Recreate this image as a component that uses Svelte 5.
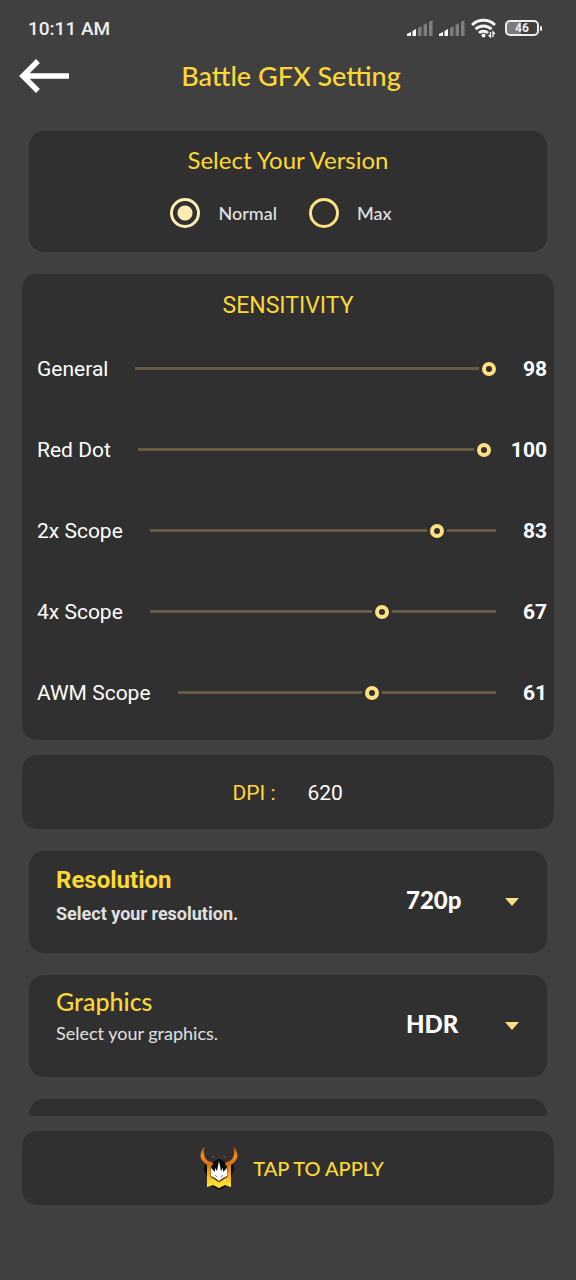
<script lang="ts">
  type Slider = { id: string; label: string; value: number };

  let version = $state('normal');
  let dpi = $state('620');
  let resolution = $state('720p');
  let graphics = $state('HDR');

  let sliders: Slider[] = $state([
    { id: 'general', label: 'General', value: 98 },
    { id: 'red-dot', label: 'Red Dot', value: 100 },
    { id: 'scope-2x', label: '2x Scope', value: 83 },
    { id: 'scope-4x', label: '4x Scope', value: 67 },
    { id: 'scope-awm', label: 'AWM Scope', value: 61 }
  ]);
</script>

{#snippet signal()}
  <svg width="26" height="18" viewBox="0 0 26 18" aria-hidden="true">
    <path d="M0 17v-2l4-2v4z" fill="#fff" />
    <path d="M5.500 17v-5l3.500-2v7z" fill="#fff" />
    <path d="M11 17V9l3.500-2v10zM16.500 17V6L20 4v13zM22 17V3l3.500-2v16z" fill="#7e7e7e" />
  </svg>
{/snippet}

{#snippet caret()}
  <svg class="caret" width="14" height="8" viewBox="0 0 14 8" aria-hidden="true">
    <path d="M0 0h14L7 8z" fill="#ffdf80" />
  </svg>
{/snippet}

<div class="screen">
  <div class="status">
    <span class="clock">10:11 AM</span>
    <div class="indicators">
      {@render signal()}
      {@render signal()}
      <svg width="26" height="20" viewBox="0 0 26 20" aria-hidden="true">
        <g fill="none" stroke="#f2f2f2" stroke-width="3">
          <path d="M1 7a16.500 16.500 0 0 1 23 0" />
          <path d="M4.500 11.200a11.500 11.500 0 0 1 16 0" />
          <path d="M8 15a6.500 6.500 0 0 1 9 0" />
        </g>
        <circle cx="12.500" cy="17.500" r="2" fill="#f2f2f2" />
        <path d="M19.500 14v5l-2-2M22 19v-5l2 2" fill="none" stroke="#f2f2f2" stroke-width="1.400" />
      </svg>
      <span class="battery">46</span>
    </div>
  </div>

  <header>
    <button class="back" aria-label="Back">
      <svg width="52" height="34" viewBox="0 0 52 34" aria-hidden="true">
        <path d="M51 17H5M20 2L5 17l15 15" fill="none" stroke="#fff" stroke-width="5.500" />
      </svg>
    </button>
    <h1>Battle GFX Setting</h1>
  </header>

  <main>
    <fieldset class="card inset version">
      <legend>Select Your Version</legend>
      <div class="choices">
        <label><input type="radio" name="version" value="normal" bind:group={version} />Normal</label>
        <label><input type="radio" name="version" value="max" bind:group={version} />Max</label>
      </div>
    </fieldset>

    <section class="card sensitivity">
      <h2>SENSITIVITY</h2>
      {#each sliders as slider (slider.id)}
        <div class="slider">
          <label for={slider.id}>{slider.label}</label>
          <input id={slider.id} type="range" min="0" max="100" bind:value={slider.value} />
          <output for={slider.id}>{slider.value}</output>
        </div>
      {/each}
    </section>

    <div class="card dpi">
      <label for="dpi">DPI :</label>
      <input id="dpi" type="text" inputmode="numeric" bind:value={dpi} />
    </div>

    <div class="card inset option strong">
      <div class="info">
        <label for="resolution">Resolution</label>
        <p>Select your resolution.</p>
      </div>
      <div class="picker">
        <select id="resolution" bind:value={resolution}>
          <option>720p</option>
        </select>
        {@render caret()}
      </div>
    </div>

    <div class="card inset option">
      <div class="info">
        <label for="graphics">Graphics</label>
        <p>Select your graphics.</p>
      </div>
      <div class="picker">
        <select id="graphics" bind:value={graphics}>
          <option>HDR</option>
        </select>
        {@render caret()}
      </div>
    </div>

    <div class="card inset option"></div>
  </main>

  <footer>
    <button class="card apply">
      <svg width="38" height="46" viewBox="0 0 38 46" aria-hidden="true">
        <defs>
          <linearGradient id="horn" x1="0" y1="0" x2="0" y2="1">
            <stop offset="0" stop-color="#9c3a0a" />
            <stop offset="0.500" stop-color="#f58f1c" />
            <stop offset="1" stop-color="#d9660c" />
          </linearGradient>
          <linearGradient id="banner" x1="0" y1="0" x2="0" y2="1">
            <stop offset="0" stop-color="#c46c14" />
            <stop offset="0.500" stop-color="#ffb020" />
            <stop offset="1" stop-color="#fff03c" />
          </linearGradient>
        </defs>
        <path d="M5 19l7 0 4-4 3-1 3 1 4 4 7 0 1 6-3 7-3 2-3 8-6 3-6-3-3-8-3-2-3-7z" fill="#0c0b0a" />
        <path d="M5 1C1 4-1 11 2 15c1 2 3 3 5 5l5 1 1-3-5-2C5 14 4 11 4 8c0-3 0-5 1-7z" fill="url(#horn)" />
        <path d="M33 1c4 3 6 10 3 14-1 2-3 3-5 5l-5 1-1-3 5-2c3-2 4-5 4-8 0-3 0-5-1-7z" fill="url(#horn)" />
        <path d="M7 18l4 2v12l8 5 8-5V20l4-2v24l-6-2-6 3-6-3-6 2z" fill="url(#banner)" />
        <path d="M12 32l7 5 7-5v8l-3 0-4 3-4-3-3 0z" fill="#ffdc32" />
        <path d="M11 22v10l8 5 8-5V22" fill="none" stroke="#8f4a10" />
        <path d="M11 23l4 4 0-4 2 3 2-10 2 10 2-3 0 4 4-4v8l-4 2-4 3-4-3-4-2z" fill="#fff" />
        <path d="M15 30l2 2M23 30l-2 2" fill="none" stroke="#8b8176" />
        <path d="M12 11l3 1-2 1zM26 11l-3 1 2 1z" fill="#b74a14" />
      </svg>
      TAP TO APPLY
    </button>
  </footer>
</div>

<style>
  :global(body) {
    margin: 0;
    background: #404040;
  }
  .screen {
    --yellow: #fdd835;
    --rounded: Lato, sans-serif;
    --medium: 'Lato Medium', Lato, sans-serif;
    --plain: Roboto, sans-serif;
    box-sizing: border-box;
    display: flex;
    flex-direction: column;
    height: 100vh;
    padding: 0 22px 75px;
    background: #404040;
    color: #fff;
    font-family: var(--plain);
  }
  h1, h2, p { margin: 0; }
  button, input, select { font: inherit; color: inherit; }

  .status {
    display: flex;
    align-items: center;
    justify-content: space-between;
    height: 56px;
    padding: 0 12px 0 6px;
    color: #eee;
  }
  .clock {
    font-size: 19px;
    font-weight: 500;
  }
  .indicators {
    display: flex;
    align-items: center;
    gap: 6px;
  }
  .battery {
    position: relative;
    box-sizing: border-box;
    width: 34px;
    height: 16px;
    margin: 0 3px 0 2px;
    border: 2px solid #eee;
    border-radius: 5px;
    background: linear-gradient(90deg, #7c7c7c 46%, transparent 46%);
    font-size: 12px;
    font-weight: 700;
    line-height: 12px;
    text-align: center;
  }
  .battery::after {
    content: '';
    position: absolute;
    top: 4px;
    right: -5px;
    width: 2px;
    height: 5px;
    border-radius: 1px;
    background: #eee;
  }

  header {
    display: grid;
    grid-template-columns: 52px 1fr 46px;
    align-items: center;
    height: 39px;
    margin-bottom: 36px;
  }
  .back {
    display: flex;
    margin-left: -4px;
    padding: 0;
    border: 0;
    background: none;
    cursor: pointer;
  }
  h1 {
    color: var(--yellow);
    font-family: var(--medium);
    font-size: 27px;
    font-weight: 500;
    line-height: 32px;
    text-align: center;
  }

  main {
    flex: 1;
    min-height: 0;
    overflow-y: auto;
    scrollbar-width: none;
  }
  .card {
    box-sizing: border-box;
    border: 0;
    border-radius: 15px;
    background: #303030;
  }
  .inset { margin: 22px 7px; }

  .version {
    display: flex;
    flex-direction: column;
    min-width: 0;
    height: 121px;
    margin-top: 0;
    padding: 13px 0 0;
  }
  legend {
    float: left;
    width: 100%;
    padding: 0;
    color: var(--yellow);
    font-family: var(--rounded);
    font-size: 24px;
    line-height: 32px;
    text-align: center;
  }
  .choices {
    display: flex;
    justify-content: center;
    gap: 32px;
    padding: 21px 14px 0 0;
    font-family: var(--medium);
    font-size: 18px;
    font-weight: 500;
    line-height: 32px;
    color: #e0e0e0;
  }
  .choices label {
    display: flex;
    align-items: center;
    gap: 18px;
  }
  .choices input {
    appearance: none;
    box-sizing: border-box;
    width: 30px;
    height: 30px;
    margin: 0;
    border: 3px solid #ffe082;
    border-radius: 50%;
  }
  .choices input:checked {
    border-color: #ffecb3;
    background: radial-gradient(circle, #ffecb3 7px, transparent 8px);
  }

  .sensitivity {
    height: 466px;
    padding: 16px 7px 0 15px;
  }
  h2 {
    margin-bottom: 6px;
    padding-right: 8px;
    color: var(--yellow);
    font-size: 23px;
    font-weight: 400;
    line-height: 32px;
    text-align: center;
  }
  .slider {
    display: flex;
    align-items: center;
    gap: 20px;
    height: 81px;
    font-size: 21px;
  }
  .slider input {
    appearance: none;
    flex: 1;
    min-width: 0;
    height: 20px;
    margin: 0;
    background: linear-gradient(#665c46, #665c46) center / calc(100% - 14px) 3px no-repeat;
  }
  .slider input::-webkit-slider-thumb {
    appearance: none;
    box-sizing: border-box;
    width: 14px;
    height: 14px;
    border: 4px solid #ffe082;
    border-radius: 50%;
    background: #303030;
    box-shadow: 0 0 0 3px #303030;
  }
  .slider output { font-weight: 700; }

  .dpi {
    display: flex;
    align-items: center;
    justify-content: center;
    gap: 32px;
    height: 74px;
    margin-top: 15px;
    padding-top: 2px;
    font-size: 21px;
  }
  .dpi label { color: var(--yellow); }
  .dpi input {
    width: 36px;
    padding: 0;
    border: 0;
    background: none;
  }

  .option {
    display: flex;
    justify-content: space-between;
    height: 102px;
    padding: 0 28px 0 27px;
    font-family: var(--rounded);
    font-size: 18px;
    line-height: 32px;
    color: #e0e0e0;
  }
  .info { padding-top: 10px; }
  .info label {
    display: block;
    color: var(--yellow);
    font-family: var(--medium);
    font-size: 25px;
    font-weight: 500;
  }
  .strong .info {
    padding-top: 13px;
    font-family: var(--plain);
    font-weight: 700;
    line-height: 36px;
  }
  .strong .info label {
    font-family: var(--plain);
    font-size: 24px;
    font-weight: 700;
    line-height: 32px;
  }
  .picker {
    display: grid;
    align-items: center;
    width: 113px;
  }
  .picker select {
    grid-area: 1 / 1;
    appearance: none;
    padding: 0 0 4px;
    border: 0;
    background: none;
    color: #fff;
    font-size: 24px;
    font-weight: 900;
    line-height: 32px;
  }
  .caret {
    grid-area: 1 / 1;
    justify-self: end;
    pointer-events: none;
  }

  footer { margin-top: 15px; }
  .apply {
    display: flex;
    align-items: center;
    justify-content: center;
    gap: 15px;
    width: 100%;
    height: 74px;
    padding: 0 0 0 8px;
    color: var(--yellow);
    font-family: var(--medium);
    font-size: 20px;
    font-weight: 500;
    cursor: pointer;
  }
</style>
